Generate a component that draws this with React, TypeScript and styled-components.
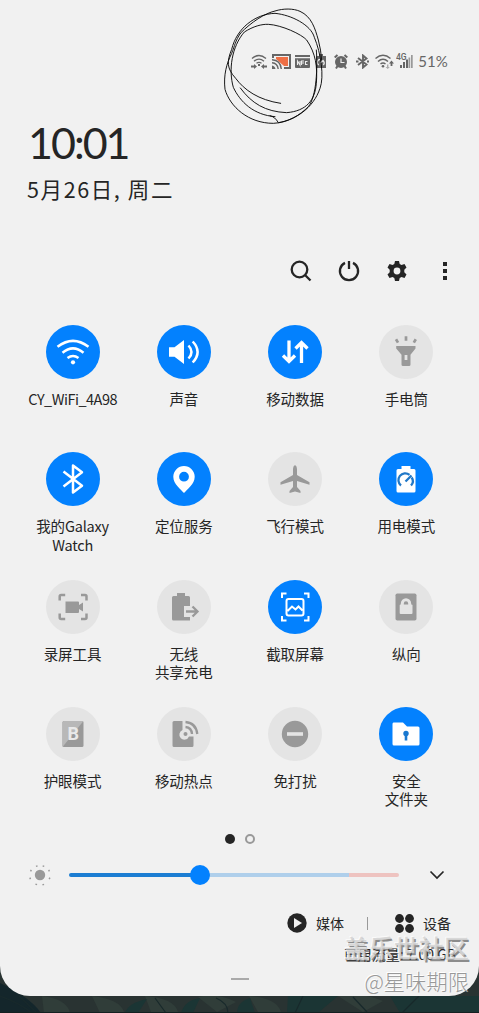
import React from "react";
import styled, { createGlobalStyle } from "styled-components";

const Global = createGlobalStyle`
  body { margin: 0; background: #263030; }
  * { box-sizing: border-box; }
  svg { display: block; flex: none; }
`;

const FONT = `"Noto Sans CJK SC", "Noto Sans", sans-serif`;
const BLUE = "#0381fe";
const GREY = "#999";
const INK = "#252525";

const Screen = styled.main`
  position: relative;
  width: 479px;
  height: 1013px;
  overflow: hidden;
  background: #263030;
  font-family: ${FONT};
  color: ${INK};
  display: flex;
  flex-direction: column;
`;
const Panel = styled.section`
  position: relative;
  z-index: 1;
  flex: none;
  height: 996px;
  background: #f1f1f1;
  border-radius: 0 0 30px 30px;
  display: flex;
  flex-direction: column;
`;
const Wallpaper = styled.svg`
  position: absolute;
  left: 0;
  bottom: 0;
`;
const StatusBar = styled.header`
  height: 20px;
  margin-top: 51px;
  padding-right: 31px;
  display: flex;
  justify-content: flex-end;
  align-items: center;
`;
const StatusIcon = styled.svg<{ $gap: number }>`
  margin-right: ${(p) => p.$gap}px;
`;
const Percent = styled.span`
  width: 29px;
  font: 15px/20px Lato, sans-serif;
  color: #666;
  white-space: nowrap;
  letter-spacing: 0.1px;
  display: flex;
  justify-content: flex-end;
`;
const Clock = styled.div`
  margin: 45px 0 0 28px;
  height: 54px;
  font: 43px/54px Lato, ${FONT};
  letter-spacing: -2px;
  white-space: nowrap;
`;
const DateLine = styled.div`
  margin-left: 27px;
  height: 38px;
  font-size: 21.5px;
  line-height: 38px;
  letter-spacing: 1.6px;
  white-space: nowrap;
`;
const Actions = styled.nav`
  height: 24px;
  margin-top: 51px;
  padding-right: 22px;
  display: flex;
  justify-content: flex-end;
  gap: 24px;
`;
const TileGrid = styled.div`
  margin-top: 42px;
  padding: 0 17px;
  height: 509px;
  display: grid;
  grid-template-columns: repeat(4, 1fr);
  grid-template-rows: repeat(4, 127.3px);
`;
const Tile = styled.div`
  display: flex;
  flex-direction: column;
  align-items: center;
`;
const Disc = styled.div<{ $on?: boolean }>`
  width: 54px;
  height: 54px;
  border-radius: 50%;
  flex: none;
  display: grid;
  place-items: center;
  background: ${(p) => (p.$on ? BLUE : "#e4e4e4")};
  color: ${(p) => (p.$on ? "#fff" : GREY)};
`;
const Label = styled.div<{ $spacing?: number }>`
  margin-top: 11px;
  font-size: 14.5px;
  line-height: 18.5px;
  text-align: center;
  white-space: pre;
  letter-spacing: ${(p) => p.$spacing ?? 0}px;
`;
const Pager = styled.div`
  height: 10px;
  display: flex;
  justify-content: center;
  gap: 10px;
`;
const Dot = styled.span<{ $active?: boolean }>`
  width: 10px;
  height: 10px;
  border-radius: 50%;
  background: ${(p) => (p.$active ? INK : "transparent")};
  border: ${(p) => (p.$active ? "none" : "2px solid #999")};
`;
const Brightness = styled.div`
  height: 24px;
  margin-top: 19px;
  padding: 0 32px 0 28px;
  display: flex;
  align-items: center;
`;
const Track = styled.div`
  flex: none;
  width: 330px;
  height: 4px;
  margin-left: 17px;
  border-radius: 2px;
  display: flex;
  align-items: center;
  background: linear-gradient(90deg, #1c7dd2 0 131px, #afcfeb 131px 280px, #eec3c0 280px);
`;
const Knob = styled.span`
  width: 20px;
  height: 20px;
  margin-left: 121px;
  border-radius: 50%;
  background: ${BLUE};
`;
const ChevronWrap = styled.div`
  margin-left: auto;
  margin-right: 2px;
`;
const Footer = styled.div`
  height: 24px;
  margin-top: 24px;
  padding-right: 28px;
  display: flex;
  justify-content: flex-end;
  align-items: center;
  font-size: 14px;
`;
const FooterItem = styled.span`
  display: flex;
  align-items: center;
  gap: 9px;
  line-height: 24px;
`;
const Divider = styled.span`
  width: 1px;
  height: 13px;
  margin: 0 27px 0 23px;
  background: #999;
`;
const Usage = styled.div`
  height: 20px;
  margin-top: 9px;
  padding-right: 23px;
  text-align: right;
  font-size: 14px;
  line-height: 20px;
  white-space: nowrap;
`;
const Handle = styled.div`
  width: 18px;
  height: 2px;
  margin: 14px auto 0;
  background: #aaa;
`;
const Scribble = styled.svg`
  position: absolute;
  z-index: 2;
  left: 215px;
  top: 0;
`;
const Watermark = styled.div`
  position: absolute;
  z-index: 3;
  right: 10px;
  top: 931px;
  display: flex;
  flex-direction: column;
  align-items: flex-end;
  white-space: nowrap;
`;
const MarkTitle = styled.span`
  font-size: 25px;
  line-height: 32px;
  font-weight: 500;
  color: rgba(205, 205, 205, 0.75);
  text-shadow: -1px -1px 0 rgba(255, 255, 255, 0.7), 1.5px 1.5px 0 rgba(80, 80, 80, 0.65);
`;
const MarkName = styled.span`
  margin-top: 2px;
  font-size: 21.3px;
  line-height: 32px;
  font-weight: 300;
  color: #999;
  text-shadow: -1px -1px 0 #fff;
`;

const stroke = { fill: "none", stroke: "currentColor" } as const;

function Glyph({ children }: { children: React.ReactNode }) {
  return (
    <svg width="54" height="54" viewBox="0 0 54 54" fill="currentColor">
      {children}
    </svg>
  );
}

const icons = {
  wifi: (
    <g>
      <g {...stroke} strokeWidth="2.5">
        <path d="M11.5 21.7Q27 10 42.500 21.700M16.500 27.700Q27 19 37.500 27.700M21.500 33Q27 29 32.500 33" />
      </g>
      <circle cx="27" cy="37.300" r="2.100" />
    </g>
  ),
  sound: (
    <g>
      <path d="M12 22.300h5.500L27 15v24l-9.500-7.300H12z" />
      <path {...stroke} strokeWidth="2.500" d="M31.500 20.500Q37.500 27 31.500 33.500M35.700 16.500Q45.500 27 35.700 37.500" />
    </g>
  ),
  data: (
    <path {...stroke} strokeWidth="3.300" d="M21 15.500v20.500M15 30.500l6 6 6-6M33.500 38V18M27.500 23.500l6-6 6 6" />
  ),
  torch: (
    <g>
      <path fillRule="evenodd" d="M17.200 21h19.300v2.500L31.500 29.800V39.500Q31.500 41 30 41h-6Q22.500 41 22.500 39.500V29.800L17.200 23.500zM25.600 30v5h2.800v-5z" />
      <path {...stroke} strokeWidth="2.700" d="M27 11.200v4.500M17 14.300l2 3.300M36.800 14.300l-2 3.300" />
    </g>
  ),
  bluetooth: (
    <path {...stroke} strokeWidth="2.500" strokeLinejoin="round" d="M17.500 19.500L36 33.700l-9 6.800v-27l9 6.800L17.500 34.500" />
  ),
  pin: (
    <path fillRule="evenodd" d="M27 14a10.700 10.700 0 0 1 10.700 10.700C37.700 32 30 37.500 27 41c-3-3.500-10.700-9-10.700-16.300A10.700 10.700 0 0 1 27 14zm0 5.800a4.900 4.900 0 1 0 0 9.800 4.900 4.900 0 0 0 0-9.800z" />
  ),
  plane: (
    <path d="M27 13q2 1 2 4v6l12.500 7.200v2.500L29 29v6l3.500 4v2L27 39.500 21.500 41v-2l3.500-4v-6l-12.500 3.700v-2.500L25 23v-6q0-3 2-4z" />
  ),
  power: (
    <g>
      <path d="M19 17h3.500v-3h9v3H35q1.500 0 1.500 1.500V39q0 1.500-1.500 1.500H19Q17.500 40.500 17.500 39V18.500Q17.500 17 19 17z" />
      <path fill="none" stroke="#2078c8" strokeWidth="2.300" d="M22 33.500A6.500 6.500 0 0 1 30.500 22.800M32.700 25.500A6.500 6.500 0 0 1 32 33.500M26.500 29.500l6-6" />
    </g>
  ),
  recorder: (
    <g>
      <path {...stroke} strokeWidth="2.500" d="M13.700 20.500v-4q0-1.500 1.500-1.500h4M35 15h4q1.500 0 1.500 1.500v4M40.500 33.500v4q0 1.500-1.500 1.500h-4M19.200 39h-4q-1.500 0-1.500-1.500v-4" />
      <path d="M19.500 21.500h12.500q1 0 1 1V25l4-2.500v9L33 29v3q0 1-1 1H19.500z" />
    </g>
  ),
  share: (
    <g>
      <path d="M16.500 16H20v-3h8v3h3.500q1.500 0 1.500 1.500V26h-6v11h6v3.500H16.500Q15 40.500 15 39V17.500Q15 16 16.500 16z" />
      <path {...stroke} strokeWidth="2.300" d="M29 31.500h11.500M35.500 26.500l5 5-5 5" />
    </g>
  ),
  capture: (
    <path {...stroke} strokeWidth="2" d="M14 18v-4.500h4.500M36 13.500h4.500V18M40.500 36v4.500H36M18.500 40.500H14V36M20.500 19h13q2 0 2 2v12.500q0 2-2 2h-13q-2 0-2-2V21q0-2 2-2zM19.500 31l4.500-4.500 3.500 3 3-3 4 4" />
  ),
  lock: (
    <g>
      <rect x="16.500" y="13.500" width="21" height="27" rx="1.800" />
      <rect x="20.700" y="24.500" width="12.800" height="9.500" rx="1" fill="#e4e4e4" />
      <path fill="none" stroke="#e4e4e4" strokeWidth="3" d="M23.300 26V23.500a3.700 3.700 0 0 1 7.400 0V26" />
    </g>
  ),
  eye: (
    <g>
      <rect x="16.500" y="14" width="21" height="26" rx="1.500" />
      <path d="M18 14h19.500L16.500 40V15.500Q16.500 14 18 14z" fill="#b8b8b8" />
      <text x="27.300" y="33.200" textAnchor="middle" fontFamily="Roboto, sans-serif" fontWeight="700" fontSize="18" fill="#e9e9e9">B</text>
    </g>
  ),
  hotspot: (
    <g>
      <path d="M17 14h8.500v9a5 5 0 1 0 6.500 6.500h4.500V38.500q0 1.500-1.500 1.500H17q-1.500 0-1.500-1.500v-23Q15.500 14 17 14z" />
      <path {...stroke} strokeWidth="2.300" d="M28.500 20Q34.500 20.500 35 27M28.500 15Q39 16 40.300 27" />
      <circle cx="28.500" cy="27" r="2" />
    </g>
  ),
  dnd: (
    <g>
      <circle cx="27" cy="27" r="13.200" />
      <rect x="19" y="25.200" width="16" height="3.600" fill="#e4e4e4" />
    </g>
  ),
  folder: (
    <g>
      <path d="M14.500 15.500H24l4 4h11q1.500 0 1.500 1.500v16q0 1.500-1.500 1.500H15q-1.500 0-1.500-1.500V17q0-1.500 1-1.500z" />
      <circle cx="27" cy="26.500" r="2.700" fill="#1878d0" />
      <rect x="25.700" y="27" width="2.600" height="6.500" fill="#1878d0" />
    </g>
  ),
};

const tiles: { icon: keyof typeof icons; label: string; on?: boolean; spacing?: number }[] = [
  { icon: "wifi", label: "CY_WiFi_4A98", on: true, spacing: -0.5 },
  { icon: "sound", label: "声音", on: true },
  { icon: "data", label: "移动数据", on: true },
  { icon: "torch", label: "手电筒" },
  { icon: "bluetooth", label: "我的Galaxy\nWatch", on: true, spacing: -0.2 },
  { icon: "pin", label: "定位服务", on: true },
  { icon: "plane", label: "飞行模式" },
  { icon: "power", label: "用电模式", on: true },
  { icon: "recorder", label: "录屏工具" },
  { icon: "share", label: "无线\n共享充电" },
  { icon: "capture", label: "截取屏幕", on: true },
  { icon: "lock", label: "纵向" },
  { icon: "eye", label: "护眼模式" },
  { icon: "hotspot", label: "移动热点" },
  { icon: "dnd", label: "免打扰" },
  { icon: "folder", label: "安全\n文件夹", on: true },
];

function StatusIcons() {
  const c = "#666";
  return (
    <>
      <StatusIcon $gap={5} width="16" height="15" viewBox="0 0 16 15">
        <path fill="none" stroke={c} strokeWidth="1.300" d="M1 4.500Q8-1.500 15 4.500M3 7.200Q8 3 13 7.200M5.500 9.300Q8 7.500 10.500 9.300" />
        <path fill={c} d="M7 10h2v2H7zM0 11.500h3V10l3 2.500-3 2.500v-1.500H0zM16 11.500h-3V10l-3 2.500 3 2.500v-1.500h3z" />
      </StatusIcon>
      <StatusIcon $gap={4} width="19" height="15" viewBox="0 0 19 15">
        <path fill="#ee6f45" d="M4 3h12v9h-4L4 5z" />
        <path fill="none" stroke={c} strokeWidth="2" d="M1 4V1h17v13h-6" />
        <path fill="none" stroke={c} strokeWidth="1.400" d="M0 5.700Q8.500 6 9.300 15M0 8.700Q5.500 9 6.200 15" />
        <path fill={c} d="M0 11.500q3 .500 3.500 3.500H0z" />
      </StatusIcon>
      <StatusIcon $gap={6} width="15" height="13" viewBox="0 0 15 13">
        <path fill={c} d="M0 0h15v2H0zM0 3.200h15V12q0 1-1 1H1q-1 0-1-1z" />
        <path fill="none" stroke="#eee" strokeWidth="1.100" d="M2.500 10V6l2.500 4V6M6.500 10V6H9M6.500 8H9M12.500 6.500h-2v3h2" />
      </StatusIcon>
      <StatusIcon $gap={8} width="10" height="14" viewBox="0 0 10 14">
        <path fill={c} d="M3 0h4v2h3v12H0V2h3z" />
        <path fill="none" stroke="#eee" strokeWidth="1.300" d="M2.800 11A3 3 0 0 1 5 5.500M7.300 7a3 3 0 0 1 0 4M4.500 9l3-3" />
      </StatusIcon>
      <StatusIcon $gap={8} width="14" height="15" viewBox="0 0 14 15">
        <circle cx="7" cy="8" r="6" fill={c} />
        <path fill="none" stroke={c} strokeWidth="2" d="M.700 3.500L3.500 1M13.300 3.500L10.500 1M3.500 12L2 14.500M10.500 12l1.500 2.500" />
        <path fill="none" stroke="#eee" strokeWidth="1.200" d="M7 4.500v4h3.500" />
      </StatusIcon>
      <StatusIcon $gap={6} width="13" height="15" viewBox="0 0 13 15">
        <path fill="none" stroke={c} strokeWidth="1.900" d="M2 4l8.500 6.500L7 13.500v-12L10.500 4.500 2 11M0 7.500h2.500M11 7.500h2" />
      </StatusIcon>
      <StatusIcon $gap={2} width="19" height="15" viewBox="0 0 19 15">
        <path fill="none" stroke={c} strokeWidth="1.500" d="M.500 4.500Q8-2 15.500 4.500M3 7.500Q8 3 13 7.500M5.500 10Q8 8 10.500 10" />
        <circle cx="8" cy="12.300" r="1.300" fill={c} />
        <path fill={c} d="M16.500 6.500l2.500 3h-1.600V12h-1.800V9.500H14z" />
        <path fill="#aaa" d="M12 10.500h1.400V13h1.400l-2.100 2-2.100-2H12z" />
      </StatusIcon>
      <StatusIcon $gap={6} width="17" height="16" viewBox="0 0 17 16">
        <text x="0" y="7" fontFamily="Roboto, sans-serif" fontWeight="500" fontSize="8.500" fill={c}>4G</text>
        <path fill={c} d="M4 12h2v3H4zM7 9h2v6H7zM10 6.500h2V15h-2z" />
        <path fill="#999" d="M12.500 4.500h1.700V15h-1.700zM15 2h1.700v13H15z" />
      </StatusIcon>
      <Percent>51%</Percent>
    </>
  );
}

export default function App() {
  return (
    <Screen>
      <Global />
      <Wallpaper width="479" height="50" viewBox="0 0 479 50">
        <rect width="479" height="50" fill="#293332" />
        <path fill="#14262b" d="M0 20q30 14 41 30H0z" />
        <g fill="#303d39">
          <path d="M42 33q25 3 28 17H44zM92 33q28 3 32 16l-24 1zM145 33q29 2 33 16h-27zM198 34q18-5 38 5l-19 10zM249 33q28 2 32 16h-23zM338 33q24-4 45 5l-20 11z" />
        </g>
        <g fill="#1b3534">
          <path d="M125 50q3-10 22-14l-9 14zM181 50q4-13 19-15l-7 15zM237 50q0-11 13-15l5 15zM288 33h50l-19 16h-32zM390 33h89v17h-79z" />
        </g>
        <path fill="none" stroke="#18292b" strokeWidth="1.200" d="M0 33q20 7 32 17M19 33l17 16M155 35l11 15M216 35q12 5 12 15M303 33l-8 17M353 34l14 15M419 33l-17 17" />
        <rect y="49" width="479" height="1" fill="#142021" />
      </Wallpaper>
      <Panel>
        <StatusBar><StatusIcons /></StatusBar>
        <Clock>10:01</Clock>
        <DateLine>5月26日, 周二</DateLine>
        <Actions>
          <svg width="24" height="24" viewBox="0 0 24 24" fill="none" stroke={INK} strokeWidth="2.300">
            <circle cx="10.500" cy="10.500" r="7.800" /><path d="M16 16l5.500 5.500" />
          </svg>
          <svg width="24" height="24" viewBox="0 0 24 24" fill="none" stroke={INK} strokeWidth="2.300">
            <path d="M8 3.900a9.100 9.100 0 1 0 8 0M12 2v8" />
          </svg>
          <svg width="24" height="24" viewBox="0 0 24 24">
            <path fill={INK} fillRule="evenodd" d="M10 2h4l.700 3 1.800 1 3-.900 2 3.500-2.200 2.100v2.600l2.200 2.100-2 3.500-3-.900-1.800 1-.700 3h-4l-.700-3-1.800-1-3 .900-2-3.500 2.200-2.100v-2.600L2.500 8.600l2-3.500 3 .900 1.800-1zM12 8.600a3.400 3.400 0 1 0 0 6.800 3.400 3.400 0 0 0 0-6.800z" />
          </svg>
          <svg width="24" height="24" viewBox="0 0 24 24" fill={INK}>
            <path d="M10 3h4v4h-4zM10 10h4v4h-4zM10 17h4v4h-4z" />
          </svg>
        </Actions>
        <TileGrid>
          {tiles.map((t) => (
            <Tile key={t.icon}>
              <Disc $on={t.on}><Glyph>{icons[t.icon]}</Glyph></Disc>
              <Label $spacing={t.spacing}>{t.label}</Label>
            </Tile>
          ))}
        </TileGrid>
        <Pager><Dot $active /><Dot /></Pager>
        <Brightness>
          <svg width="24" height="24" viewBox="0 0 24 24" fill={GREY}>
            <circle cx="12" cy="12" r="5.200" />
            <path stroke={GREY} strokeWidth="1.700" d="M8.500 2.500l.500 1.300M15.700 2.500l-.500 1.300M2.300 7.300l1.300.600M21.700 7.300l-1.300.600M1.500 15.700l1.300-.600M22.200 15.700l-1.300-.600M8 22l.500-1.300M15.500 22.300l-.500-1.300" />
          </svg>
          <Track><Knob /></Track>
          <ChevronWrap>
            <svg width="16" height="10" viewBox="0 0 16 10" fill="none" stroke={INK} strokeWidth="1.700"><path d="M1.500 1.500L8 8l6.500-6.500" /></svg>
          </ChevronWrap>
        </Brightness>
        <Footer>
          <FooterItem>
            <svg width="20" height="20" viewBox="0 0 20 20"><circle cx="10" cy="10" r="9.700" fill={INK} /><path d="M7 5v10l8-5z" fill="#f1f1f1" /></svg>
            媒体
          </FooterItem>
          <Divider />
          <FooterItem>
            <svg width="19" height="19" viewBox="0 0 19 19" fill={INK}>
              <circle cx="4.500" cy="4.500" r="4.400" /><circle cx="14.500" cy="4.500" r="4.400" /><circle cx="4.500" cy="14.500" r="4.400" /><circle cx="14.500" cy="14.500" r="4.400" />
            </svg>
            设备
          </FooterItem>
        </Footer>
        <Usage>已用流量: 7.00 GB</Usage>
        <Handle />
      </Panel>
      <Scribble width="264" height="130" viewBox="0 0 792 390" fill="none" stroke="#080808" strokeWidth="2.800" strokeLinecap="round">
        <path d="M197 310C130 300 88 270 62 235C35 205 35 185 50 148C65 85 120 42 180 40C230 45 288 75 298 112C318 160 328 230 315 265C295 325 240 360 190 368Q180 350 165 347" />
        <path d="M180 350C115 345 75 305 55 262C40 210 50 140 88 96C115 79 140 72 160 73C200 75 260 103 275 120C302 160 308 200 304 250C300 300 275 333 215 338C150 335 110 310 76 264" />
        <path d="M76 100C110 65 150 40 180 33C205 25 235 25 255 34C290 50 300 85 310 120Q318 150 320 180" />
        <path d="M76 100C60 125 60 135 50 160C35 190 25 225 30 268C45 320 100 370 175 370C220 368 255 345 280 320C305 290 308 200 304 150" />
      </Scribble>
      <Watermark>
        <MarkTitle>盖乐世社区</MarkTitle>
        <MarkName>@星味期限</MarkName>
      </Watermark>
    </Screen>
  );
}
